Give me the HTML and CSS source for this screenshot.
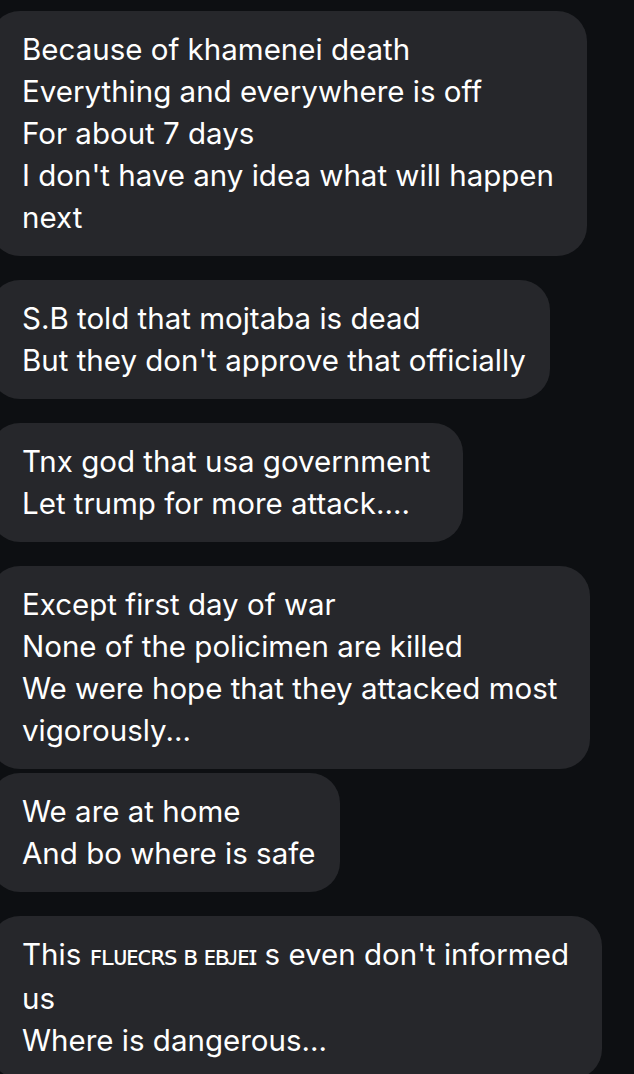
FILE: index.html
```html
<!DOCTYPE html>
<html lang="en">
<head>
	<meta charset="UTF-8">
	<title>Messages</title>
	<link rel="stylesheet" href="styles.css">
</head>
<body>
	<div id="thread">
		<div class="bubble wrapped">Because of khamenei death<br>Everything and everywhere is off<br>For about 7 days<br>I don't have any idea what will happen<br>next</div>
		<div class="bubble">S.B told that mojtaba is dead<br>But they don't approve that officially</div>
		<div class="bubble wrapped">Tnx god that usa government<br>Let trump for more attack....</div>
		<div class="group">
			<div class="bubble wrapped">Except first day of war<br>None of the policimen are killed<br>We were hope that they attacked most<br>vigorously...</div>
			<div class="bubble">We are at home<br>And bo where is safe</div>
		</div>
		<div class="bubble wrapped">This <span class="garble">ꜰʟᴜᴇᴄʀꜱ ʙ ᴇʙᴊᴇɪ</span> s even don't informed<br>us<br>Where is dangerous...</div>
	</div>
</body>
</html>
```
FILE: styles.css
```css
* {
	margin: 0;
	padding: 0;
}
body {
	background-color: #0d0f12;
	font-family: Inter, "Noto Sans", sans-serif;
	color: #fff;
	overflow: hidden;
}
#thread {
	display: flex;
	flex-direction: column;
	align-items: flex-start;
	gap: 24px;
	padding-top: 11px;
}
.group {
	display: flex;
	flex-direction: column;
	align-items: flex-start;
	gap: 4px;
}
.bubble {
	margin-left: -10px;
	padding: 17px 24px 18px 32px;
	background-color: #26272b;
	border-radius: 30px;
	font-size: 29.5px;
	line-height: 42px;
	white-space: nowrap;
}
.wrapped {
	padding-right: 33px;
}
.garble {
	font-family: "DejaVu Sans", sans-serif;
	font-size: 26px;
	letter-spacing: -1.5px;
}
```
